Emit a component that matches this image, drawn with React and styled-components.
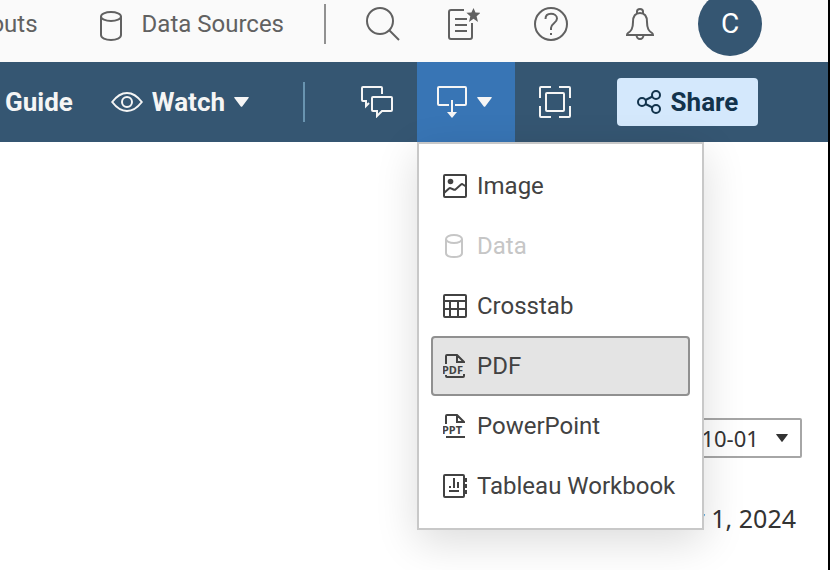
import React from "react";
import styled, { createGlobalStyle } from "styled-components";

const GlobalStyle = createGlobalStyle`
  * { box-sizing: border-box; }
  body {
    margin: 0;
    background: #ffffff;
    color: #424242;
    font: 400 24px/32px Roboto, "Liberation Sans", sans-serif;
  }
  button, select { font: inherit; color: inherit; }
  svg { display: block; flex: none; }
`;

const Page = styled.div`
  min-height: 100vh;
  border-right: 2px solid #000000;
  overflow: hidden;
`;

const Header = styled.header`
  display: flex;
  justify-content: flex-end;
  height: 62px;
  padding: 0 66px 14px 0;
  background: #fafafa;
  color: #616161;
`;

const HeaderNav = styled.nav`
  display: flex;
  flex: none;
  align-items: center;
  gap: 62px;
`;

const NavLink = styled.a`
  display: flex;
  align-items: center;
  gap: 20px;
  color: inherit;
  text-decoration: none;
  white-space: nowrap;
`;

const Divider = styled.span`
  flex: none;
  align-self: center;
  width: 2px;
  height: 40px;
  background: ${(p) => p.$color};
`;

const HeaderActions = styled.div`
  display: flex;
  flex: none;
  align-items: center;
  margin-left: 40px;
`;

const IconButton = styled.button`
  display: flex;
  flex: none;
  align-items: center;
  justify-content: center;
  margin: 0 ${(p) => p.$after || 0}px 0 ${(p) => p.$before || 0}px;
  padding: 0;
  border: 0;
  background: none;
`;

const Avatar = styled.button`
  flex: none;
  width: 64px;
  height: 64px;
  padding: 0;
  border: 0;
  border-radius: 50%;
  background: #355672;
  color: #ffffff;
  font-size: 28px;
`;

const Toolbar = styled.div`
  display: flex;
  align-items: center;
  justify-content: flex-end;
  height: 80px;
  padding-right: 70px;
  background: #355672;
  color: #f5f5f5;
`;

const ToolButton = styled.button`
  display: flex;
  flex: none;
  align-items: center;
  gap: ${(p) => p.$gap || 0}px;
  height: 80px;
  padding: 0;
  border: 0;
  background: none;
  font-size: 26px;
  font-weight: 700;
  white-space: nowrap;
`;

const DownloadButton = styled(ToolButton)`
  width: 98px;
  padding: 0 20px;
  background: #3875b5;
`;

const ToolGroup = styled.div`
  display: flex;
  flex: none;
  align-items: center;
  gap: ${(p) => p.$gap}px;
  margin: 0 ${(p) => p.$after || 0}px 0 ${(p) => p.$before || 0}px;
`;

const ShareButton = styled.button`
  display: flex;
  flex: none;
  align-items: center;
  justify-content: center;
  gap: 10px;
  width: 141px;
  height: 48px;
  padding: 0;
  border: 0;
  border-radius: 4px;
  background: #d4e8fc;
  color: #12334c;
  font-size: 26px;
  font-weight: 700;
`;

const MenuAnchor = styled.div`
  position: relative;
  flex: none;
`;

const Menu = styled.div`
  position: absolute;
  z-index: 1;
  top: 100%;
  left: 0;
  padding: 12px;
  border: 2px solid #c8c8c8;
  background: #ffffff;
  box-shadow: 0 12px 40px rgba(0, 0, 0, 0.14);
`;

const MenuItem = styled.button`
  display: flex;
  align-items: center;
  gap: 10px;
  width: 100%;
  height: 60px;
  padding: 0 13px 0 10px;
  border: 2px solid ${(p) => (p.$selected ? "#909090" : "transparent")};
  border-radius: 4px;
  background: ${(p) => (p.$selected ? "#e4e4e4" : "none")};
  color: #424242;
  text-align: left;
  white-space: nowrap;

  &:disabled { color: #c6c6c6; }
`;

const Content = styled.main`
  display: flex;
  flex-direction: column;
  align-items: flex-end;
  gap: 44px;
  padding: 276px 26px 34px;
  color: #333333;
  font-family: "Noto Sans", "Open Sans", sans-serif;
`;

const SelectBox = styled.label`
  display: grid;
  align-items: center;
  font-size: 22px;

  > * { grid-area: 1 / 1; }
  > svg { justify-self: end; margin-right: 14px; pointer-events: none; }
`;

const DateSelect = styled.select`
  height: 40px;
  padding: 0 41px 0 12px;
  border: 2px solid #a6a6a6;
  border-radius: 2px;
  background: #ffffff;
  appearance: none;
`;

const DateText = styled.p`
  margin: 0 6px 0 0;
  font-size: 25px;
`;

const Line = ({ w, h, sw = 2, children }) => (
  <svg width={w} height={h} viewBox={`0 0 ${w} ${h}`} fill="none" stroke="currentColor" strokeWidth={sw} aria-hidden="true">
    {children}
  </svg>
);

const Caret = ({ w = 15, h = 10 }) => (
  <svg width={w} height={h} viewBox="0 0 16 11" fill="currentColor" aria-hidden="true">
    <path d="M0.6 0h14.8c.6 0 .8.5.4 1L8.8 10.4c-.4.6-1.2.6-1.6 0L.2 1C-.2.5 0 0 .6 0Z" />
  </svg>
);

const CylinderIcon = () => (
  <Line w={22} h={34}>
    <ellipse cx="11" cy="9.500" rx="10" ry="4.500" />
    <path d="M1 9.500V28c0 3 4.500 5 10 5s10-2 10-5V9.500" />
  </Line>
);

const SearchIcon = () => (
  <Line w={34} h={34}>
    <circle cx="14" cy="14" r="13" />
    <path d="M23.500 23.500 33 33" />
  </Line>
);

const FavoritesIcon = () => (
  <Line w={32} h={32}>
    <path d="M16 2H3Q1 2 1 4v25q0 2 2 2h19q2 0 2-2V15" />
    <path d="M7 11h12M7 17h12M7 23h12" />
    <path d="m25.500 0 2 4.500 5 .3-3.900 3.500 1.400 5.700-4.500-3.200-4.500 3.200 1.300-5.700-3.900-3.500 5-.3Z" fill="currentColor" stroke="none" />
  </Line>
);

const HelpIcon = () => (
  <Line w={34} h={34}>
    <circle cx="17" cy="17" r="16" />
    <path d="M11.500 12c0-3.500 2.500-5.200 5.500-5.200s6 1.800 6 4.700c0 4.700-6 4.800-6 9.500v2M17 26v2" />
  </Line>
);

const BellIcon = () => (
  <Line w={28} h={32}>
    <path d="M7 14c0-5 2-9 7-9s7 4 7 9c0 7 2 9 5 11 1 .7 1 1 1 2H1c0-1 0-1.300 1-2 3-2 5-4 5-11Z" />
    <path d="M11 5.500V3.600Q11 1 14 1t3 2.600v1.900M10.500 27c0 2 1.500 4 3.500 4s3.500-2 3.500-4" />
  </Line>
);

const EyeIcon = () => (
  <Line w={32} h={20}>
    <path d="M1.200 10C5 5 9.500 1 16 1s11 4 14.800 9C27 15 22.500 19 16 19S5 15 1.200 10Z" />
    <circle cx="16" cy="10" r="5" />
  </Line>
);

const CommentsIcon = () => (
  <Line w={32} h={32}>
    <path d="M21 8V2q0-1-1-1H2Q1 1 1 2v12q0 1 1 1h3v5l3-3" />
    <path d="M12 11h18q1 0 1 1v12q0 1-1 1h-9l-5 5v-5h-4q-1 0-1-1V12q0-1 1-1Z" />
  </Line>
);

const DownloadIcon = () => (
  <Line w={30} h={32}>
    <path d="M12 19H2q-1 0-1-1V2q0-1 1-1h26q1 0 1 1v16q0 1-1 1H18M15 14v13" />
    <path d="M10 26h10l-5 6Z" fill="currentColor" stroke="none" />
  </Line>
);

const FullScreenIcon = () => (
  <Line w={32} h={32}>
    <path d="M1 12V2q0-1 1-1h10M20 1h10q1 0 1 1v10M31 20v10q0 1-1 1H20M12 31H2q-1 0-1-1V20" />
    <rect x="7" y="7" width="18" height="18" rx="1" />
  </Line>
);

const ShareIcon = () => (
  <Line w={24} h={24}>
    <circle cx="5" cy="12" r="4" />
    <circle cx="19" cy="5" r="4" />
    <circle cx="19" cy="19" r="4" />
    <path d="m8.500 10 7-3.500M8.500 14l7 3.500" />
  </Line>
);

const ImageIcon = () => (
  <Line w={24} h={24}>
    <rect x="1" y="1" width="22" height="22" rx="1" />
    <circle cx="7.500" cy="7.500" r="2.800" fill="currentColor" stroke="none" />
    <path d="m1 19 5-4.500q1-.8 2 0l2.500 1q1 .5 2 0l5.500-5q1-.8 2 0l3 2" />
  </Line>
);

const DataIcon = () => (
  <Line w={24} h={24}>
    <ellipse cx="11" cy="5" rx="8" ry="4" />
    <path d="M3 5v14c0 2.500 3.600 4 8 4s8-1.500 8-4V5" />
  </Line>
);

const CrosstabIcon = () => (
  <Line w={24} h={24}>
    <rect x="1" y="1" width="22" height="22" rx="1" />
    <path d="M1 7h22M1 15h22M7 7v16M15 7v16" />
  </Line>
);

const FileLabel = styled.text`
  font: 700 11px "Noto Sans", sans-serif;
  fill: currentColor;
  stroke: none;
`;

const FileIcon = ({ label, sides }) => (
  <Line w={24} h={24}>
    <path d="M3 10V2q0-1 1-1h10l7 7v1M14 1v7h7" />
    <path d={sides ? "M3 21v1q0 1 1 1h16q1 0 1-1v-2" : "M3 23h19"} />
    <FileLabel x="-1" y="20">{label}</FileLabel>
  </Line>
);

const WorkbookIcon = () => (
  <Line w={24} h={24}>
    <rect x="1" y="1" width="20" height="22" rx="1" />
    <path d="M21 6h3M21 12h3M21 18h3" strokeWidth="4" />
    <path d="M6 17h10M7 12v2M11 4v10M15 8v6" />
  </Line>
);

const formats = [
  { name: "Image", icon: <ImageIcon /> },
  { name: "Data", icon: <DataIcon />, disabled: true },
  { name: "Crosstab", icon: <CrosstabIcon /> },
  { name: "PDF", icon: <FileIcon label="PDF" sides />, selected: true },
  { name: "PowerPoint", icon: <FileIcon label="PPT" /> },
  { name: "Tableau Workbook", icon: <WorkbookIcon /> },
];

export default function App() {
  return (
    <Page>
      <GlobalStyle />
      <Header>
        <HeaderNav>
          <NavLink href="#outs">outs</NavLink>
          <NavLink href="#data-sources"><CylinderIcon />Data Sources</NavLink>
        </HeaderNav>
        <HeaderActions>
          <Divider $color="#919191" />
          <IconButton $before={40} $after={48} aria-label="Search"><SearchIcon /></IconButton>
          <IconButton $after={54} aria-label="Favorites"><FavoritesIcon /></IconButton>
          <IconButton $after={58} aria-label="Help"><HelpIcon /></IconButton>
          <IconButton $after={44} aria-label="Notifications"><BellIcon /></IconButton>
          <Avatar>C</Avatar>
        </HeaderActions>
      </Header>
      <Toolbar>
        <ToolGroup $gap={38} $after={54}>
          <ToolButton>Guide</ToolButton>
          <ToolButton $gap={9}><EyeIcon />Watch<Caret /></ToolButton>
        </ToolGroup>
        <ToolGroup $gap={56} $after={24}>
          <Divider $color="#6994b0" />
          <IconButton aria-label="Comments"><CommentsIcon /></IconButton>
        </ToolGroup>
        <MenuAnchor>
          <DownloadButton $gap={10} aria-label="Download" aria-expanded="true">
            <DownloadIcon /><Caret />
          </DownloadButton>
          <Menu role="menu">
            {formats.map((f) => (
              <MenuItem key={f.name} role="menuitem" $selected={f.selected} disabled={f.disabled}>
                {f.icon}{f.name}
              </MenuItem>
            ))}
          </Menu>
        </MenuAnchor>
        <ToolGroup $gap={46} $before={24}>
          <IconButton aria-label="Full screen"><FullScreenIcon /></IconButton>
          <ShareButton><ShareIcon />Share</ShareButton>
        </ToolGroup>
      </Toolbar>
      <Content>
        <SelectBox>
          <DateSelect aria-label="Date" defaultValue="2024-10-01">
            <option>2024-10-01</option>
          </DateSelect>
          <Caret w={12} h={8} />
        </SelectBox>
        <DateText>October 1, 2024</DateText>
      </Content>
    </Page>
  );
}
